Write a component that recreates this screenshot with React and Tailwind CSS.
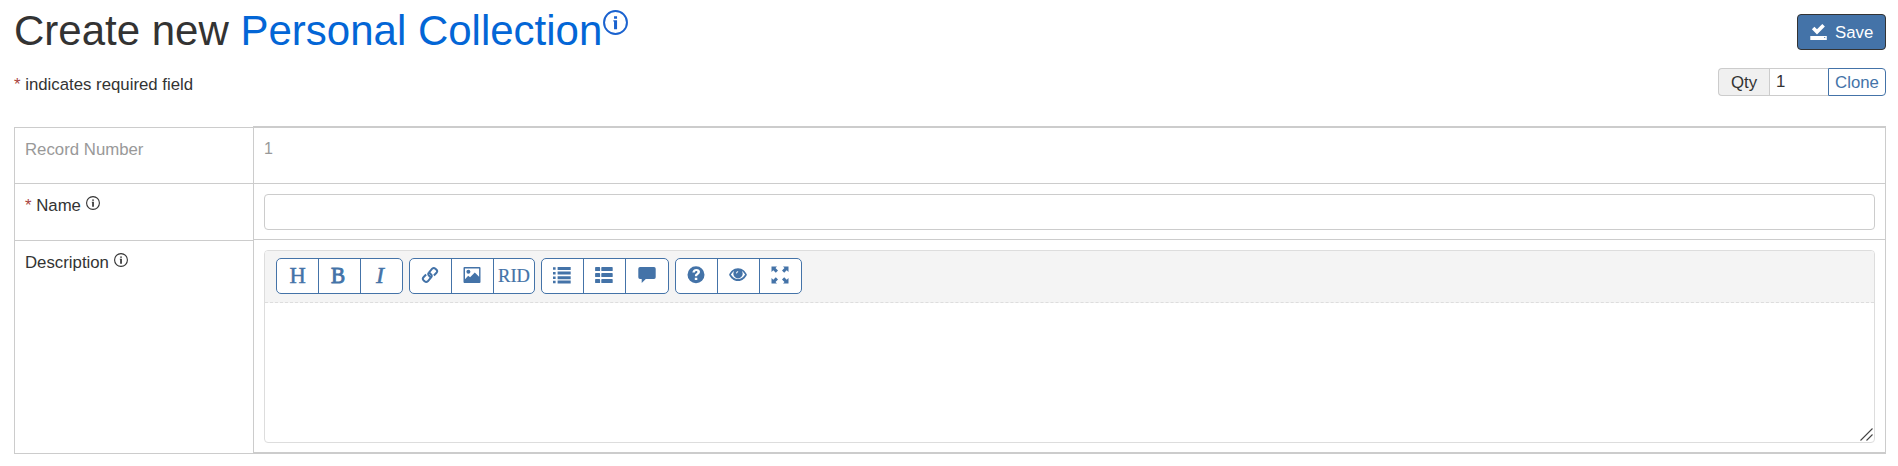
import React from "react";

function InfoIcon({ className }) {
  return (
    <svg viewBox="0 0 24 24" className={className} fill="currentColor">
      <circle cx="12" cy="12" r="11" fill="none" stroke="currentColor" strokeWidth="1.9" />
      <path d="M10.600 5.900h2.900v2.400h-2.900zM9.900 9.900h3.600v8.700h-2.900v-7.500h-.7z" />
    </svg>
  );
}

function SaveIcon() {
  return (
    <svg width="17" height="17" viewBox="0 0 17 17" fill="currentColor">
      <path d="M1.900 5.200 4.400 2.700 7 5.300 12.300.1l2.600 2.400-7.900 8.100z" />
      <path fillRule="evenodd" d="M.3 12h16.500v3.900H.3zM14.200 13v1h1v-1z" />
    </svg>
  );
}

const icons = {
  link: (
    <g fill="none" stroke="currentColor" strokeWidth="2" strokeLinejoin="round">
      <path d="M9.600 11.200 7.900 9.500Q6.600 8 7.900 6.600L11.200 2.700Q12.800 1.300 14.400 2.700L15.500 3.800Q16.900 5.300 15.500 6.800L12.900 9.500" />
      <path d="M8.400 6.800 10.100 8.500Q11.400 10 10.100 11.400L6.800 15.300Q5.200 16.700 3.600 15.300L2.500 14.200Q1.100 12.700 2.500 11.200L5.100 8.500" />
    </g>
  ),
  picture: (
    <g>
      <path fillRule="evenodd" d="M1.500 1h15a1 1 0 0 1 1 1v14a1 1 0 0 1-1 1h-15a1 1 0 0 1-1-1V2a1 1 0 0 1 1-1zM2 2.600V13.200l3.200-3.500 1.900 1.500 4.700-4.700 4.300 4.300V2.600z" />
      <circle cx="5.400" cy="5.800" r="2" />
    </g>
  ),
  list: (
    <path d="M0 1.200h2.600v2.600H0zM4.600 1h13.100v3H4.600zM0 5.900h2.600v2.600H0zM4.600 5.600h13.100v3H4.600zM0 10.500h2.600v2.600H0zM4.600 10.200h13.100v3H4.600zM0 14.700h2.600v2.600H0zM4.600 14.400h13.100v3H4.600z" />
  ),
  thList: (
    <path d="M.8 1h3.600q.7 0 .7.700v2.700q0 .7-.7.7H.8q-.7 0-.7-.7V1.700Q.1 1 .8 1zM7 1h10q.7 0 .7.700v2.700q0 .7-.7.7H7q-.7 0-.7-.7V1.700Q6.300 1 7 1zM.8 7h3.600q.7 0 .7.700v2.700q0 .7-.7.7H.8q-.7 0-.7-.7V7.700Q.1 7 .8 7zM7 7h10q.7 0 .7.700v2.700q0 .7-.7.7H7q-.7 0-.7-.7V7.700Q6.300 7 7 7zM.8 13h3.600q.7 0 .7.700v2.700q0 .7-.7.7H.8q-.7 0-.7-.7v-2.700q0-.7.7-.7zM7 13h10q.7 0 .7.700v2.700q0 .7-.7.7H7q-.7 0-.7-.7v-2.700q0-.7.7-.7z" />
  ),
  comment: (
    <path d="M2 1h14a1.700 1.700 0 0 1 1.700 1.700v8.500A1.700 1.700 0 0 1 16 12.900H7.800L3.700 17v-4.100H2A1.700 1.700 0 0 1 .3 11.200V2.700A1.700 1.700 0 0 1 2 1z" />
  ),
  question: (
    <path fillRule="evenodd" d="M9 .3a8.500 8.500 0 1 1 0 17 8.500 8.500 0 0 1 0-17zM5.400 6.600h2.500c.1-1 .6-1.500 1.400-1.500.7 0 1.100.4 1.100 1 0 .7-.5 1-1.200 1.500C8.300 8.300 7.900 8.900 7.900 10.300h2.300c0-.9.400-1.200 1.200-1.800 1-.7 1.600-1.400 1.600-2.700 0-1.700-1.400-2.900-3.600-2.900-2.400 0-3.900 1.400-4 3.700zM7.800 11.700V14h2.500v-2.300z" />
  ),
  eye: (
    <g>
      <path fillRule="evenodd" d="M9 2.300c4.600 0 7.600 3.500 8.900 6.400-1.500 3.200-4.400 6.300-8.900 6.300S1.600 11.900.1 8.700C1.400 5.800 4.400 2.300 9 2.300zM5.200 4.900C3.700 5.900 2.700 7.200 1.900 8.600c1.500 2.600 4 4.500 7.100 4.500s5.600-1.900 7.100-4.500c-.8-1.400-1.800-2.700-3.300-3.700.6.900.9 1.900.9 2.900A4.700 4.700 0 0 1 9 12.400a4.700 4.700 0 0 1-4.700-4.600c0-1 .3-2 .9-2.900z" />
      <circle cx="9" cy="7.600" r="3.200" />
      <path d="M6.900 7.300Q7.300 5.500 9.200 5.100L9 6.300Q7.900 6.500 7.700 7.500z" fill="white" />
    </g>
  ),
  fullscreen: (
    <path d="M.5.500H6L4.500 2 7 4.500 4.800 6.700 2.300 4.200.5 6zM17.500.5V6l-1.800-1.800-2.500 2.500L11 4.500 13.500 2 12 .5zM.5 17.500V12l1.800 1.800 2.500-2.500L7 13.500 4.500 16 6 17.500zM17.500 17.500H12l1.500-1.500L11 13.500l2.200-2.200 2.500 2.500L17.500 12z" />
  ),
};

function Icon({ name }) {
  return (
    <svg width="18" height="18" viewBox="0 0 18 18" fill="currentColor" className="mr-px mb-[2px] block">
      {icons[name]}
    </svg>
  );
}

function Group({ children, className = "" }) {
  return (
    <div className={"flex h-9 divide-x divide-[#4473a8] overflow-hidden rounded-[5px] border border-[#4473a8] bg-white text-[#4473a8] " + className}>
      {children}
    </div>
  );
}

function Tool({ children, label, width = "w-[42px]" }) {
  return (
    <button aria-label={label} className={"flex h-full items-center justify-center " + width}>
      {children}
    </button>
  );
}

const serif = "pb-[3px] font-['Liberation_Serif',serif] text-[24px] leading-none ";

export default function App() {
  return (
    <div className="h-[466px] overflow-hidden bg-white pl-[14px] pr-3 font-['Liberation_Sans',Arial,sans-serif] text-[16.8px] leading-6 text-[#333]">
      <header className="flex h-[68px] items-start justify-between pt-[14px]">
        <h1 className="-mt-2 flex items-start text-[42px] leading-[50px] whitespace-pre">
          <span>Create new </span>
          <a className="text-[#0366d6]">Personal Collection</a>
          <InfoIcon className="mt-1 ml-px size-[25px] text-[#1a62cf]" />
        </h1>
        <button className="flex h-9 w-[89px] items-center gap-2 rounded-[4px] border border-[#333] bg-[#4473a8] pl-3 text-white">
          <SaveIcon />
          <span className="pt-px">Save</span>
        </button>
      </header>

      <div className="flex h-[58px] items-start justify-between">
        <p className="pt-[5px]"><span className="text-[#a94442]">*</span> indicates required field</p>
        <div className="flex h-7 w-[168px] leading-7">
          <span className="w-[51px] rounded-l-[4px] border border-r-0 border-[#ccc] bg-[#f0f0f0] text-center">Qty</span>
          <span className="w-[59px] border border-r-0 border-[#ccc] pl-[6px] leading-[26px]">1</span>
          <button className="w-[58px] rounded-r-[4px] border border-[#4473a8] text-center text-[#4473a8]">Clone</button>
        </div>
      </div>

      <div className="flex">
        <div className="mt-px w-[239px] border border-r-0 border-[#ccc]">
          <div className="h-14 border-b border-[#ccc] pt-[10px] pl-[10px] text-[#999]">Record Number</div>
          <div className="flex h-[57px] border-b border-[#ccc] pt-[10px] pl-[10px]">
            <span><span className="text-[#a94442]">*</span> Name</span>
            <InfoIcon className="mt-[2px] ml-[5px] size-[14px]" />
          </div>
          <div className="flex h-[211px] pt-[10px] pl-[10px]">
            <span>Description</span>
            <InfoIcon className="mt-[2px] ml-[5px] size-[14px]" />
          </div>
        </div>

        <div className="flex-1 border border-y-2 border-[#ccc]">
          <div className="h-14 border-b border-[#ccc] pt-[9px] pl-[10px] text-[16px] text-[#999]">1</div>
          <div className="h-14 border-b border-[#ccc] px-[10px] pt-[10px]">
            <input aria-label="Name" className="block h-9 w-full rounded-[4px] border border-[#ccc] bg-white outline-none" />
          </div>
          <div className="h-[212px] px-[10px] pt-[10px]">
            <div className="h-[193px] overflow-hidden rounded-[4px] border border-[#ddd]">
              <div className="flex h-[52px] border-b border-dashed border-[#ddd] bg-[#f4f4f4] pt-[7px] pl-[11px]">
                <Group>
                  <Tool label="Heading"><span className={serif + "scale-x-[0.94] pl-px [-webkit-text-stroke:0.5px_#4473a8]"}>H</span></Tool>
                  <Tool label="Bold"><span className={serif + "scale-x-[0.88] pr-[2px] [-webkit-text-stroke:1px_#4473a8]"}>B</span></Tool>
                  <Tool label="Italic" width="w-[41px]"><span className={serif + "pr-[3px] italic [-webkit-text-stroke:0.5px_#4473a8]"}>I</span></Tool>
                </Group>
                <Group className="ml-[6px]">
                  <Tool label="Link"><Icon name="link" /></Tool>
                  <Tool label="Image"><Icon name="picture" /></Tool>
                  <Tool label="Record link" width="w-[40px]"><span className="font-['Liberation_Serif',serif] text-[18.5px] [-webkit-text-stroke:0.2px_#4473a8]">RID</span></Tool>
                </Group>
                <Group className="ml-[6px]">
                  <Tool label="List"><Icon name="list" /></Tool>
                  <Tool label="Ordered list"><Icon name="thList" /></Tool>
                  <Tool label="Quote"><Icon name="comment" /></Tool>
                </Group>
                <Group className="ml-[6px]">
                  <Tool label="Help"><Icon name="question" /></Tool>
                  <Tool label="Preview"><Icon name="eye" /></Tool>
                  <Tool label="Full screen" width="w-[41px]"><Icon name="fullscreen" /></Tool>
                </Group>
              </div>
              <div className="flex h-[139px] items-end justify-end pr-px pb-px">
                <svg width="13" height="13" viewBox="0 0 13 13" fill="none" stroke="#444" strokeWidth="1.100">
                  <path d="M.5 12.500 12.500.5M6.500 12.500 12.500 6.500" />
                </svg>
              </div>
            </div>
          </div>
        </div>
      </div>
    </div>
  );
}
